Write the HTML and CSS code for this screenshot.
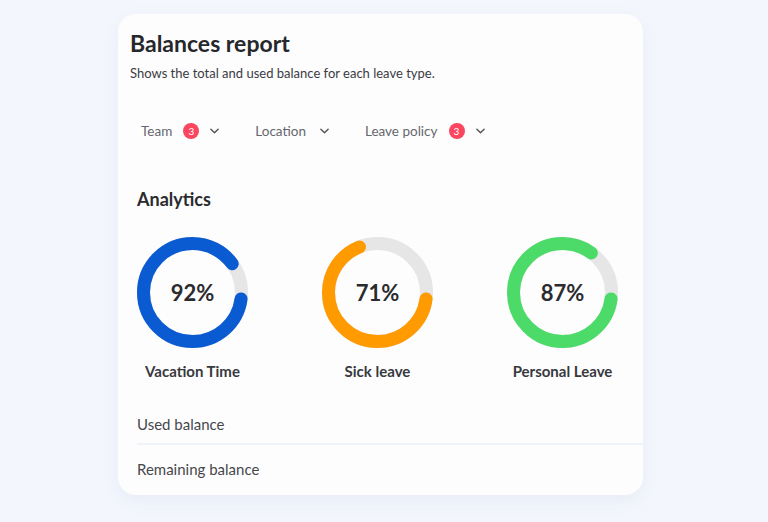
FILE: index.html
```html
<!DOCTYPE html>
<html lang="en">
<head>
    <meta charset="UTF-8">
    <meta name="viewport" content="width=device-width, initial-scale=1.0">
    <title>Balances report</title>
    <link rel="stylesheet" href="styles.css">
</head>
<body>
    <div class="card">
        <div class="card-header">
            <h1>Balances report</h1>
            <p class="subtitle">Shows the total and used balance for each leave type.</p>
        </div>

        <div class="filters">
            <div class="filter">
                <span>Team</span>
                <span class="badge">3</span>
                <svg class="chevron" viewBox="0 0 10 6"><path d="M1 1l4 4 4-4"/></svg>
            </div>
            <div class="filter">
                <span>Location</span>
                <svg class="chevron" viewBox="0 0 10 6"><path d="M1 1l4 4 4-4"/></svg>
            </div>
            <div class="filter">
                <span>Leave policy</span>
                <span class="badge">3</span>
                <svg class="chevron" viewBox="0 0 10 6"><path d="M1 1l4 4 4-4"/></svg>
            </div>
        </div>

        <div class="analytics">
            <h2>Analytics</h2>
            <div class="charts">
                <div class="chart">
                    <div class="donut">
                        <svg viewBox="0 0 111 111">
                            <circle class="track" cx="55.5" cy="55.5" r="49"/>
                            <circle class="arc blue" cx="55.5" cy="55.5" r="49" stroke-dasharray="270.25 400" stroke-dashoffset="-6.5"/>
                        </svg>
                        <span class="value">92%</span>
                    </div>
                    <div class="label">Vacation Time</div>
                </div>
                <div class="chart">
                    <div class="donut">
                        <svg viewBox="0 0 111 111">
                            <circle class="track" cx="55.5" cy="55.5" r="49"/>
                            <circle class="arc orange" cx="55.5" cy="55.5" r="49" stroke-dasharray="205.6 400" stroke-dashoffset="-6.5"/>
                        </svg>
                        <span class="value">71%</span>
                    </div>
                    <div class="label">Sick leave</div>
                </div>
                <div class="chart">
                    <div class="donut">
                        <svg viewBox="0 0 111 111">
                            <circle class="track" cx="55.5" cy="55.5" r="49"/>
                            <circle class="arc green" cx="55.5" cy="55.5" r="49" stroke-dasharray="254.86 400" stroke-dashoffset="-6.5"/>
                        </svg>
                        <span class="value">87%</span>
                    </div>
                    <div class="label">Personal Leave</div>
                </div>
            </div>

            <div class="rows">
                <div class="row">Used balance</div>
                <div class="row">Remaining balance</div>
            </div>
        </div>
    </div>
</body>
</html>
```

FILE: styles.css
```css
* {
    margin: 0;
    padding: 0;
    box-sizing: border-box;
}

body {
    font-family: 'Lato', 'Open Sans', sans-serif;
    background: #f3f6fc;
    min-height: 100vh;
    padding: 14px 0 0 118px;
    color: #2b2b2e;
}

.card {
    background: #fdfdfe;
    width: 525px;
    height: 481px;
    border-radius: 18px;
    box-shadow: 0 6px 16px rgba(160, 175, 210, 0.12);
    overflow: hidden;
}

.card-header {
    padding: 15px 12px 0;
}

h1 {
    font-size: 23px;
    font-weight: 700;
    color: #26272b;
    line-height: 28px;
}

.subtitle {
    margin-top: 8px;
    font-size: 13px;
    color: #3a3b3f;
    line-height: 16px;
}

.filters {
    display: flex;
    align-items: center;
    padding: 26px 0 0 23px;
    height: 74px;
}

.filter {
    display: flex;
    align-items: center;
    font-size: 13.5px;
    color: #66676b;
    margin-right: 36px;
}

.badge {
    display: inline-flex;
    align-items: center;
    justify-content: center;
    width: 16px;
    height: 16px;
    border-radius: 50%;
    background: #fb4660;
    color: #fff;
    font-size: 10px;
    margin-left: 11px;
}

.chevron {
    width: 9px;
    height: 6px;
    margin-left: 14px;
    fill: none;
    stroke: #55565a;
    stroke-width: 1.6;
    stroke-linecap: round;
    stroke-linejoin: round;
}

.badge + .chevron {
    margin-left: 11px;
}

.analytics {
    padding: 33px 0 0 19px;
}

h2 {
    font-size: 18px;
    font-weight: 700;
    color: #2b2b2e;
    line-height: 22px;
}

.charts {
    display: flex;
    gap: 74px;
    margin-top: 27px;
}

.chart {
    width: 111px;
    display: flex;
    flex-direction: column;
    align-items: center;
}

.donut {
    position: relative;
    width: 111px;
    height: 111px;
}

.donut svg {
    display: block;
    width: 111px;
    height: 111px;
}

.donut circle {
    fill: none;
    stroke-width: 13;
}

.donut .track {
    stroke: #e6e6e7;
}

.donut .arc {
    stroke-linecap: round;
}

.arc.blue { stroke: #0a5bd1; }
.arc.orange { stroke: #ff9a00; }
.arc.green { stroke: #4cdb68; }

.value {
    position: absolute;
    inset: 0;
    display: flex;
    align-items: center;
    justify-content: center;
    font-size: 22px;
    font-weight: 700;
    color: #2b2b2e;
}

.label {
    margin-top: 14px;
    white-space: nowrap;
    font-size: 15px;
    font-weight: 700;
    color: #38393d;
}

.rows {
    margin-top: 17px;
}

.row {
    font-size: 15px;
    color: #46474b;
    height: 46px;
    padding-top: 7px;
    line-height: 40px;
}

.row + .row {
    height: 50px;
    padding-top: 0;
    line-height: 48px;
    border-top: 2px solid #f0f3fa;
}
```
